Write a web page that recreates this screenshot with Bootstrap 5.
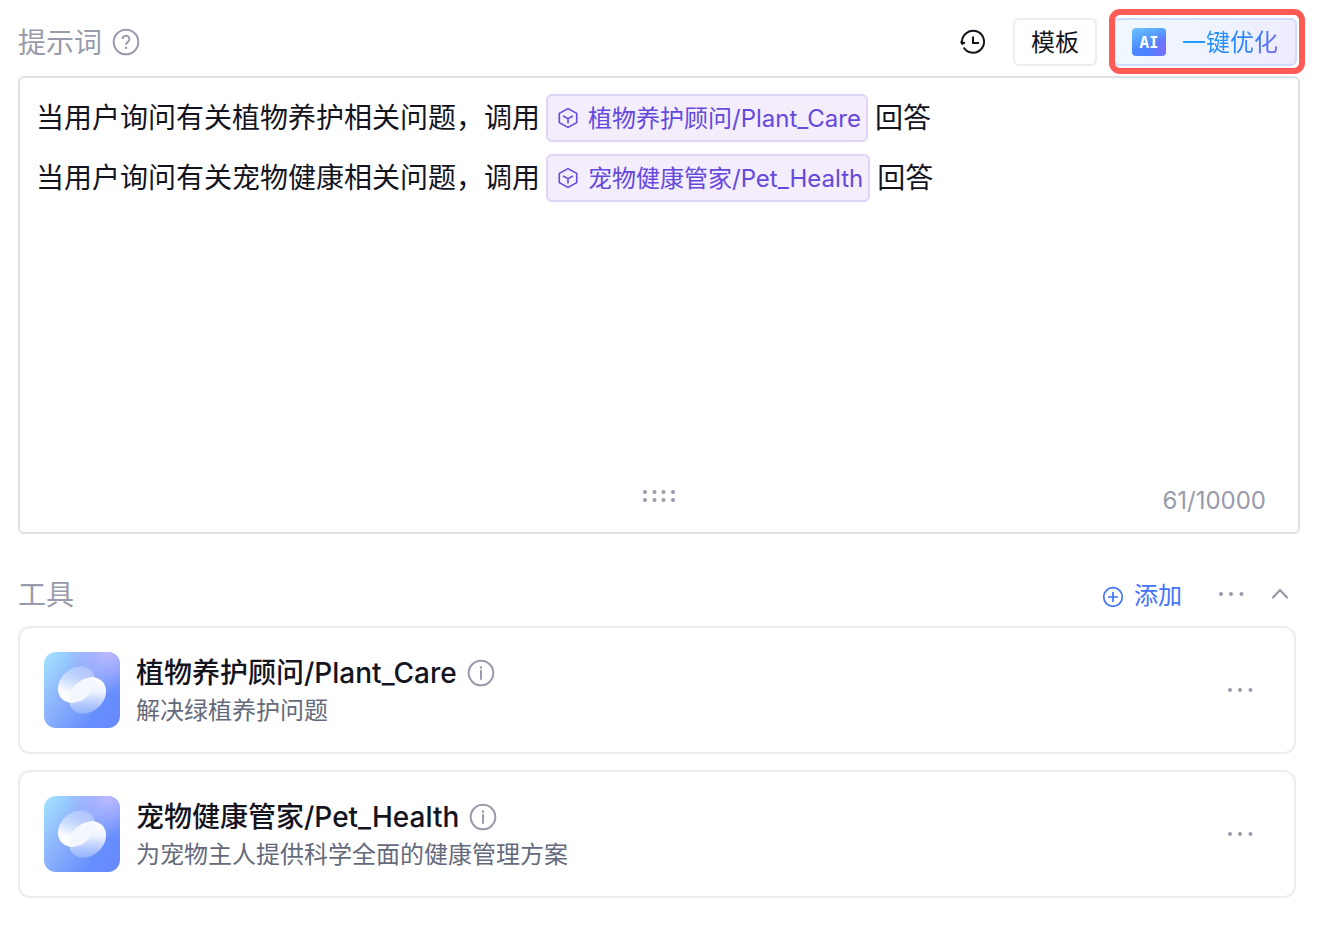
<!DOCTYPE html>
<html lang="zh-CN">
<head>
<meta charset="utf-8">
<meta name="viewport" content="width=device-width, initial-scale=1">
<title>提示词与工具</title>
<link href="https://cdn.jsdelivr.net/npm/bootstrap@5.3.0/dist/css/bootstrap.min.css" rel="stylesheet">
<style>
  body { font-family: Inter, "Noto Sans CJK SC", sans-serif; font-size: 24px; line-height: 32px; color: #14141e; background: #fff; }
  .page { padding: 18px 36px 30px 18px; }
  .bar { padding-right: 3px; }
  .header-bar { margin-bottom: 10px; }
  .section-title { font-size: 28px; line-height: 48px; padding-top: 1px; margin-bottom: -1px; font-weight: 400; color: #979bab; }
  .muted { color: #979bab; }
  .plain { border: 0; background: none; padding: 0; display: inline-flex; align-items: center; }
  .tool-btn { height: 48px; border: 2px solid #ececf2; border-radius: 6px; background: #fff; padding: 2px 16px 0; color: #14141e; font-size: 24px; }
  .optimize { position: relative; height: 48px; border: 2px solid #cfdafc; border-radius: 6px; padding: 0 17px; background: linear-gradient(110deg, #f2f8ff, #eef3ff 60%, #eeeafd); }
  .optimize::after { content: ""; position: absolute; inset: -11px -10px -10px -6px; border: 6px solid #ff5b54; border-radius: 11px; pointer-events: none; }
  .grad-text { padding-top: 2px; background: linear-gradient(110deg, #1aa0ff, #2f80ff 70%, #7a62f5); -webkit-background-clip: text; background-clip: text; color: transparent; }
  .ai-tag { width: 34px; height: 28px; border-radius: 4px; color: #fff; font: 700 16px/28px "Noto Sans Mono", "DejaVu Sans Mono", monospace; background: radial-gradient(circle at 95% 75%, #7c6dfa, transparent 45%), linear-gradient(160deg, #6cc3ff, #4a86ff 60%, #4a80ff); }
  .editor { border: 2px solid #e0e0e7; border-radius: 6px; min-height: 458px; margin-bottom: 36px; }
  .prompt-text { font-size: 28px; line-height: 60px; padding: 10px 16px 0; outline: 0; }
  .ref-chip { display: inline-flex; align-items: center; height: 48px; margin: 0 7px 4px 6px; padding: 0 5px 0 8px; border: 2px solid #dfd4f8; border-radius: 6px; background: #f3edfc; color: #6549dd; font-size: 24px; line-height: 44px; vertical-align: middle; gap: 8px; }
  .chip-label { padding-top: 2px; }
  .editor-foot { display: grid; grid-template-columns: 1fr auto 1fr; padding: 0 32px 15px; }
  .drag-dots { margin-top: 3px; }
  .add-link { color: #4374fa; margin-right: 27px; padding-top: 3px; }
  .more { margin: 0 20px 0 8px; }
  .tool-item { border: 2px solid #ececf2; border-radius: 12px; padding: 20px 24px; min-height: 128px; margin-right: 4px; }
  .tool-info { padding-top: 2px; }
  .tool-name { font-size: 28px; line-height: 40px; font-weight: 500; }
  .tool-desc { line-height: 36px; color: #646a7c; }
  .hint { margin-left: 10px; }
</style>
</head>
<body>
<svg width="0" height="0" class="position-absolute" aria-hidden="true">
  <defs>
    <linearGradient id="tile" x1="0" y1="0" x2="1" y2=".7"><stop offset="0" stop-color="#a3e6ff"/><stop offset=".42" stop-color="#8db2fc"/><stop offset=".85" stop-color="#668efd"/><stop offset="1" stop-color="#688aff"/></linearGradient>
    <radialGradient id="glow" cx=".85" cy="0" r=".55"><stop offset="0" stop-color="#bdbaff"/><stop offset="1" stop-color="#b0b0ff" stop-opacity="0"/></radialGradient>
    <linearGradient id="leafA" gradientUnits="userSpaceOnUse" x1="38" y1="14" x2="28" y2="51"><stop offset="0" stop-color="#fff" stop-opacity=".22"/><stop offset=".4" stop-color="#fff" stop-opacity=".5"/><stop offset=".75" stop-color="#fff" stop-opacity=".95"/><stop offset="1" stop-color="#fff"/></linearGradient>
    <linearGradient id="leafB" gradientUnits="userSpaceOnUse" x1="46" y1="25" x2="40" y2="62"><stop offset="0" stop-color="#fff"/><stop offset=".35" stop-color="#fff" stop-opacity=".88"/><stop offset=".75" stop-color="#fff" stop-opacity=".45"/><stop offset="1" stop-color="#fff" stop-opacity=".25"/></linearGradient>
    <clipPath id="leafClip"><ellipse cx="32.500" cy="32.500" rx="20.500" ry="16" transform="rotate(-42 32.500 32.500)"/></clipPath>
    <clipPath id="leafClipB"><ellipse cx="43.500" cy="43.500" rx="20.500" ry="16" transform="rotate(-42 43.500 43.500)"/></clipPath>
    <symbol id="orb" viewBox="0 0 76 76">
      <rect width="76" height="76" rx="12" fill="url(#tile)"/><rect width="76" height="76" rx="12" fill="url(#glow)"/>
      <g clip-path="url(#leafClip)"><rect width="76" height="76" fill="url(#leafA)"/></g>
      <g clip-path="url(#leafClipB)"><rect width="76" height="76" fill="url(#leafB)"/></g>
      <g clip-path="url(#leafClip)"><g clip-path="url(#leafClipB)"><rect width="76" height="76" fill="#f3f5ff" fill-opacity=".8"/></g></g>
    </symbol>
    <symbol id="info" viewBox="0 0 28 28"><g fill="none" stroke="currentColor" stroke-width="2"><circle cx="14" cy="14" r="12.300"/><path d="M14 11.800V20" stroke-linecap="round"/></g><circle cx="14" cy="8.500" r="1.200" fill="currentColor"/></symbol>
    <symbol id="dots" viewBox="0 0 28 8"><g fill="currentColor"><circle cx="4" cy="4" r="2"/><circle cx="14" cy="4" r="2"/><circle cx="24.500" cy="4" r="2"/></g></symbol>
    <symbol id="cube" viewBox="0 0 24 24"><path d="M12 2.600 20.700 7.400V16.600L12 21.400 3.300 16.600V7.400ZM7 10 12 12.600 17 10M12 12.600V17.600" fill="none" stroke="currentColor" stroke-width="1.600" stroke-linejoin="round"/></symbol>
  </defs>
</svg>
<main class="page">
  <header class="bar header-bar d-flex align-items-center justify-content-between">
    <div class="d-flex align-items-center">
      <h1 class="section-title" id="prompt-title">提示词</h1>
      <button class="plain muted hint" type="button" aria-label="帮助"><svg width="28" height="28" viewBox="0 0 28 28" fill="none" stroke="currentColor" stroke-width="2"><circle cx="14" cy="14" r="12.300"/><path d="M10.600 11.100a3.400 3.400 0 1 1 5.300 2.800Q14 15.100 14 16.800"/><circle cx="14" cy="19.800" r="1.200" fill="currentColor" stroke="none"/></svg></button>
    </div>
    <div class="d-flex align-items-center gap-3">
      <button class="plain me-2" type="button" aria-label="历史记录"><svg width="30" height="28" viewBox="0 0 30 28" fill="none" stroke="#14141e" stroke-width="2"><path d="M3.200 15.500A11 11 0 1 1 4.700 19.500M1.800 13.200 3.300 15.800 6 14.300M14 8.500V15H20"/></svg></button>
      <button class="tool-btn" type="button">模板</button>
      <button class="optimize d-flex align-items-center gap-3" type="button"><span class="ai-tag">AI</span><span class="grad-text">一键优化</span></button>
    </div>
  </header>

  <section class="editor d-flex flex-column justify-content-between">
    <div class="prompt-text" role="textbox" aria-multiline="true" aria-labelledby="prompt-title" contenteditable="true" spellcheck="false">
      <div>当用户询问有关植物养护相关问题，调用<span class="ref-chip"><svg width="24" height="24"><use href="#cube"/></svg><span class="chip-label">植物养护顾问/Plant_Care</span></span>回答</div>
      <div>当用户询问有关宠物健康相关问题，调用<span class="ref-chip"><svg width="24" height="24"><use href="#cube"/></svg><span class="chip-label">宠物健康管家/Pet_Health</span></span>回答</div>
    </div>
    <div class="editor-foot muted">
      <span></span>
      <svg class="drag-dots" width="36" height="16" viewBox="0 0 36 16" fill="currentColor"><circle cx="4" cy="4" r="2"/><circle cx="13.500" cy="4" r="2"/><circle cx="22.500" cy="4" r="2"/><circle cx="32" cy="4" r="2"/><circle cx="4" cy="12" r="2"/><circle cx="13.500" cy="12" r="2"/><circle cx="22.500" cy="12" r="2"/><circle cx="32" cy="12" r="2"/></svg>
      <span class="text-end">61/10000</span>
    </div>
  </section>

  <section>
    <div class="bar d-flex align-items-center justify-content-between mb-2">
      <h2 class="section-title">工具</h2>
      <div class="d-flex align-items-center">
        <button class="plain add-link gap-2" type="button"><svg width="26" height="24" viewBox="0 0 26 24" fill="none" stroke="currentColor" stroke-width="1.700"><circle cx="13" cy="13" r="9.300"/><path d="M13 8v10M8 13h10"/></svg>添加</button>
        <button class="plain muted more" type="button" aria-label="更多"><svg width="28" height="8"><use href="#dots"/></svg></button>
        <button class="plain muted ms-1 me-1" type="button" aria-label="收起"><svg width="24" height="24" viewBox="0 0 24 24" fill="none" stroke="currentColor" stroke-width="2.200" stroke-linecap="round" stroke-linejoin="round"><path d="m4 15.500 7-7.500 7 7.500"/></svg></button>
      </div>
    </div>
    <div class="d-flex flex-column gap-3">
      <article class="tool-item d-flex align-items-center gap-3">
        <svg width="76" height="76" class="flex-shrink-0" aria-hidden="true"><use href="#orb"/></svg>
        <div class="tool-info flex-grow-1">
          <div class="d-flex align-items-center"><h3 class="tool-name mb-0">植物养护顾问/Plant_Care</h3><button class="plain muted hint" type="button" aria-label="详情"><svg width="28" height="28"><use href="#info"/></svg></button></div>
          <p class="tool-desc mb-0">解决绿植养护问题</p>
        </div>
        <button class="plain muted me-3" type="button" aria-label="更多"><svg width="28" height="8"><use href="#dots"/></svg></button>
      </article>
      <article class="tool-item d-flex align-items-center gap-3">
        <svg width="76" height="76" class="flex-shrink-0" aria-hidden="true"><use href="#orb"/></svg>
        <div class="tool-info flex-grow-1">
          <div class="d-flex align-items-center"><h3 class="tool-name mb-0">宠物健康管家/Pet_Health</h3><button class="plain muted hint" type="button" aria-label="详情"><svg width="28" height="28"><use href="#info"/></svg></button></div>
          <p class="tool-desc mb-0">为宠物主人提供科学全面的健康管理方案</p>
        </div>
        <button class="plain muted me-3" type="button" aria-label="更多"><svg width="28" height="8"><use href="#dots"/></svg></button>
      </article>
    </div>
  </section>
</main>
<script src="https://cdn.jsdelivr.net/npm/bootstrap@5.3.0/dist/js/bootstrap.bundle.min.js"></script>
</body>
</html>
